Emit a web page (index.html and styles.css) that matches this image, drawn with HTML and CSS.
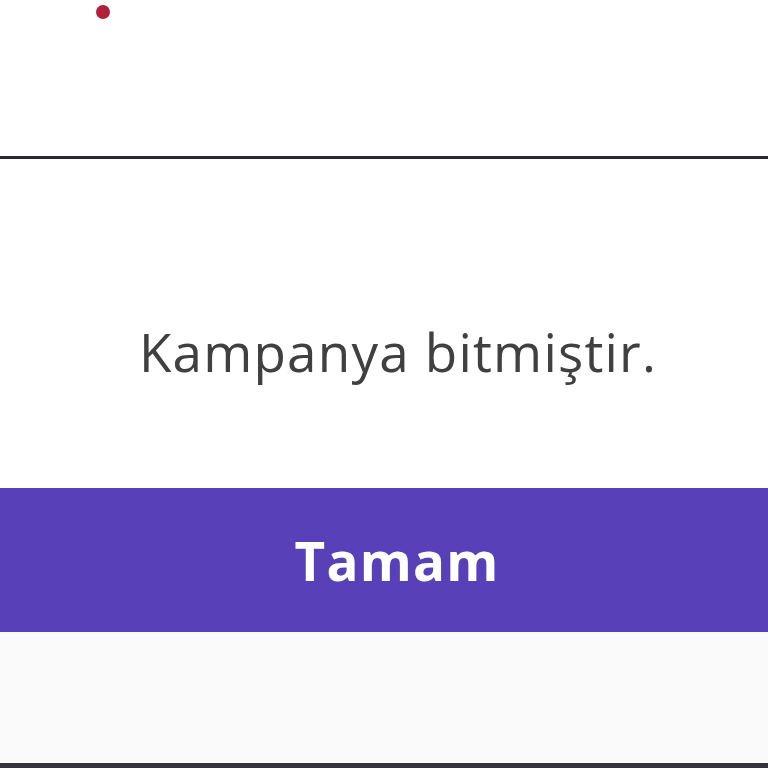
FILE: index.html
```html
<!DOCTYPE html>
<html>
<head>
<meta charset="utf-8">
<link rel="stylesheet" href="styles.css">
</head>
<body>
<div class="page">
  <div class="top">
    <span class="dot"></span>
  </div>
  <div class="dialog">
    <div class="message">Kampanya bitmiştir.</div>
    <button class="ok">Tamam</button>
    <div class="foot"></div>
  </div>
</div>
</body>
</html>
```
FILE: styles.css
```css
html, body {
  margin: 0;
  padding: 0;
  background: #ffffff;
}
.page {
  width: 768px;
  height: 768px;
  display: flex;
  flex-direction: column;
  overflow: hidden;
  font-family: "Open Sans", "Noto Sans", sans-serif;
}
.top {
  height: 156px;
  position: relative;
}
.dot {
  position: absolute;
  left: 96px;
  top: 5px;
  width: 14px;
  height: 14px;
  border-radius: 50%;
  background: #b0203a;
}
.dialog {
  flex: 1;
  border-top: 3px solid #2a2a2e;
  border-bottom: 5px solid #35343a;
  display: flex;
  flex-direction: column;
}
.message {
  height: 329px;
  display: flex;
  align-items: center;
  justify-content: center;
  padding-top: 56px;
  padding-left: 28px;
  box-sizing: border-box;
  font-size: 53px;
  color: #404040;
  letter-spacing: 1.2px;
}
.ok {
  height: 144px;
  border: none;
  margin: 0;
  background: #5841b8;
  color: #ffffff;
  font-family: "Open Sans", "Noto Sans", sans-serif;
  font-weight: 700;
  font-size: 53px;
  letter-spacing: 1.2px;
  padding: 0 0 0 26px;
}
.foot {
  flex: 1;
  background: #fafafa;
}
```
